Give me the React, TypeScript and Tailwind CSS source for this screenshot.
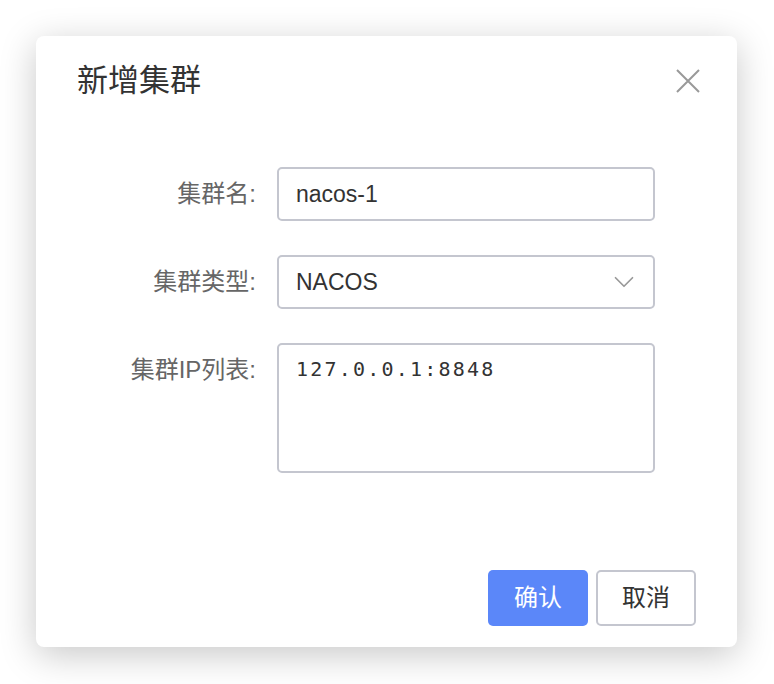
import { ChevronDown } from "lucide-react";

const sans = "font-['Liberation_Sans','Noto_Sans_CJK_SC',sans-serif]";

type RowProps = {
    label: string;
    children: React.ReactNode;
};

function Row({ label, children }: RowProps) {
    return (
        <div className="flex items-start gap-[21px]">
            <div className="w-[220px] shrink-0 text-right text-[24px] leading-[54px] text-[#666]">{label}</div>
            {children}
        </div>
    );
}

export default function App() {
    return (
        <div className={`w-[774px] h-[684px] bg-white pl-[36px] pt-[36px] ${sans}`}>
            <div className="w-[701px] h-[611px] bg-white rounded-[8px] shadow-[0_8px_36px_rgba(0,0,0,0.22)] flex flex-col">
                <div className="flex items-center justify-between pl-[41px] pr-[37px] pt-[25px]">
                    <h1 className="text-[31px] leading-[40px] text-[#333]">新增集群</h1>
                    <svg width="24" height="24" viewBox="0 0 24 24" className="text-[#999]">
                        <path d="M1 1L23 23M23 1L1 23" stroke="currentColor" strokeWidth="2" fill="none" />
                    </svg>
                </div>

                <div className="mt-[66px] flex flex-col gap-[34px]">
                    <Row label="集群名:">
                        <div className="w-[378px] h-[54px] border-2 border-[#c4c6cf] rounded-[5px] px-[17px] flex items-center text-[23px] text-[#333]">
                            nacos-1
                        </div>
                    </Row>
                    <Row label="集群类型:">
                        <div className="w-[378px] h-[54px] border-2 border-[#c4c6cf] rounded-[5px] pl-[17px] pr-[12px] flex items-center justify-between text-[23px] text-[#333]">
                            <span>NACOS</span>
                            <ChevronDown className="w-[34px] h-[34px] text-[#999]" strokeWidth={1.2} />
                        </div>
                    </Row>
                    <Row label="集群IP列表:">
                        <div className="w-[378px] h-[130px] border-2 border-[#c4c6cf] rounded-[5px] px-[17px] pt-[10px] font-['DejaVu_Sans_Mono',monospace] text-[20px] leading-[28px] tracking-[2.2px] text-[#333]">
                            127.0.0.1:8848
                        </div>
                    </Row>
                </div>

                <div className="mt-auto flex justify-end gap-[8px] pr-[41px] pb-[21px]">
                    <button className="w-[100px] h-[56px] rounded-[5px] bg-[#5b87f9] text-white text-[24px]">确认</button>
                    <button className="w-[100px] h-[56px] rounded-[5px] border-2 border-[#c4c6cf] bg-white text-[#333] text-[24px]">取消</button>
                </div>
            </div>
        </div>
    );
}
